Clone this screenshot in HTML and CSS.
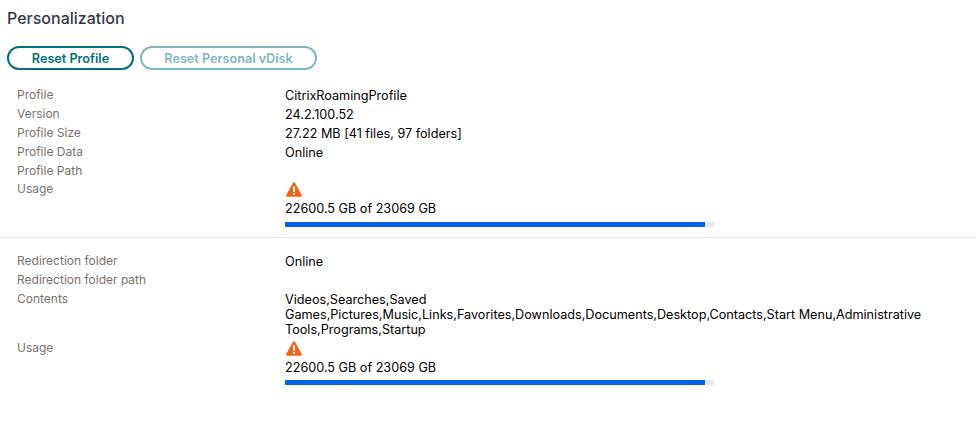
FILE: index.html
```html
<!DOCTYPE html>
<html lang="en">

<head>
  <meta charset="UTF-8" />
  <meta name="viewport" content="width=device-width, initial-scale=1.0" />
  <title>Personalization</title>
  <link rel="stylesheet" href="styles.css">
</head>

<body>
  <h1 class="title">Personalization</h1>

  <div class="actions">
    <button class="btn">Reset Profile</button>
    <button class="btn btn-disabled" disabled>Reset Personal vDisk</button>
  </div>

  <section class="details first">
    <div class="label">Profile</div>
    <div class="value">CitrixRoamingProfile</div>
    <div class="label">Version</div>
    <div class="value">24.2.100.52</div>
    <div class="label">Profile Size</div>
    <div class="value">27.22 MB [41 files, 97 folders]</div>
    <div class="label">Profile Data</div>
    <div class="value">Online</div>
    <div class="label">Profile Path</div>
    <div class="value"></div>
    <div class="label">Usage</div>
    <div class="value usage">
      <svg class="warn" viewBox="0 0 16 15" width="16" height="15">
        <path fill="#f9630f" d="M8 .3c-.5 0-.9.3-1.100.7L.3 12.900c-.5.9.1 1.900 1.100 1.900h13.200c1 0 1.600-1 1.100-1.900L9.100 1C8.900.6 8.500.3 8 .3z" />
        <rect x="7" y="4.500" width="2" height="5.500" fill="#fff" />
        <rect x="7" y="11" width="2" height="2" fill="#fff" />
      </svg>
      <div class="usage-text">22600.5 GB of 23069 GB</div>
      <div class="bar"><div class="bar-fill" style="width: 98%"></div></div>
    </div>
  </section>

  <hr class="divider">

  <section class="details">
    <div class="label">Redirection folder</div>
    <div class="value">Online</div>
    <div class="label">Redirection folder path</div>
    <div class="value"></div>
    <div class="label">Contents</div>
    <div class="value contents">Videos,Searches,Saved Games,Pictures,Music,Links,Favorites,Downloads,Documents,Desktop,Contacts,Start Menu,Administrative Tools,Programs,Startup</div>
    <div class="label">Usage</div>
    <div class="value usage">
      <svg class="warn" viewBox="0 0 16 15" width="16" height="15">
        <path fill="#f9630f" d="M8 .3c-.5 0-.9.3-1.100.7L.3 12.900c-.5.9.1 1.900 1.100 1.900h13.200c1 0 1.600-1 1.100-1.900L9.100 1C8.900.6 8.500.3 8 .3z" />
        <rect x="7" y="4.500" width="2" height="5.500" fill="#fff" />
        <rect x="7" y="11" width="2" height="2" fill="#fff" />
      </svg>
      <div class="usage-text">22600.5 GB of 23069 GB</div>
      <div class="bar"><div class="bar-fill" style="width: 98%"></div></div>
    </div>
  </section>
</body>

</html>
```

FILE: styles.css
```css
* {
  box-sizing: border-box;
}

body {
  margin: 0;
  padding: 0 0 0 7px;
  background: #fff;
  font-family: "Inter", "Roboto", sans-serif;
  font-size: 12.65px;
  color: #000;
}

.title {
  margin: 0;
  padding-top: 8px;
  font-size: 16px;
  line-height: 20px;
  font-weight: 500;
  color: #333a45;
}

.actions {
  display: flex;
  gap: 6px;
  margin-top: 18px;
}

.btn {
  height: 24px;
  width: 127px;
  padding: 0;
  border: 2px solid #02707f;
  border-radius: 12px;
  background: #fff;
  font-family: inherit;
  font-size: 12.65px;
  font-weight: 600;
  color: #02707f;
}

.btn-disabled {
  width: 177px;
  border-color: #80b7bf;
  color: #80b7bf;
}

.details {
  display: grid;
  grid-template-columns: 268px 1fr;
  padding-left: 10px;
}

.first {
  margin-top: 16.4px;
}

.label {
  font-size: 12px;
  line-height: 18.8px;
  color: #77726e;
}

.value {
  min-height: 18.8px;
  padding-top: 1px;
  line-height: 17.8px;
}

.contents {
  width: 650px;
  line-height: 15px;
  padding: 2px 0;
}

.usage {
  padding-top: 0;
  line-height: 18px;
}

.warn {
  display: block;
  margin: 2px 0 3px 1px;
}

.bar {
  width: 429px;
  height: 5px;
  margin-top: 3.6px;
  background: #e6e6e6;
}

.bar-fill {
  height: 100%;
  background: #0460e8;
}

.divider {
  margin: 10px 0 14px -7px;
  border: 0;
  border-top: 1px solid #e4e4e4;
}
```
